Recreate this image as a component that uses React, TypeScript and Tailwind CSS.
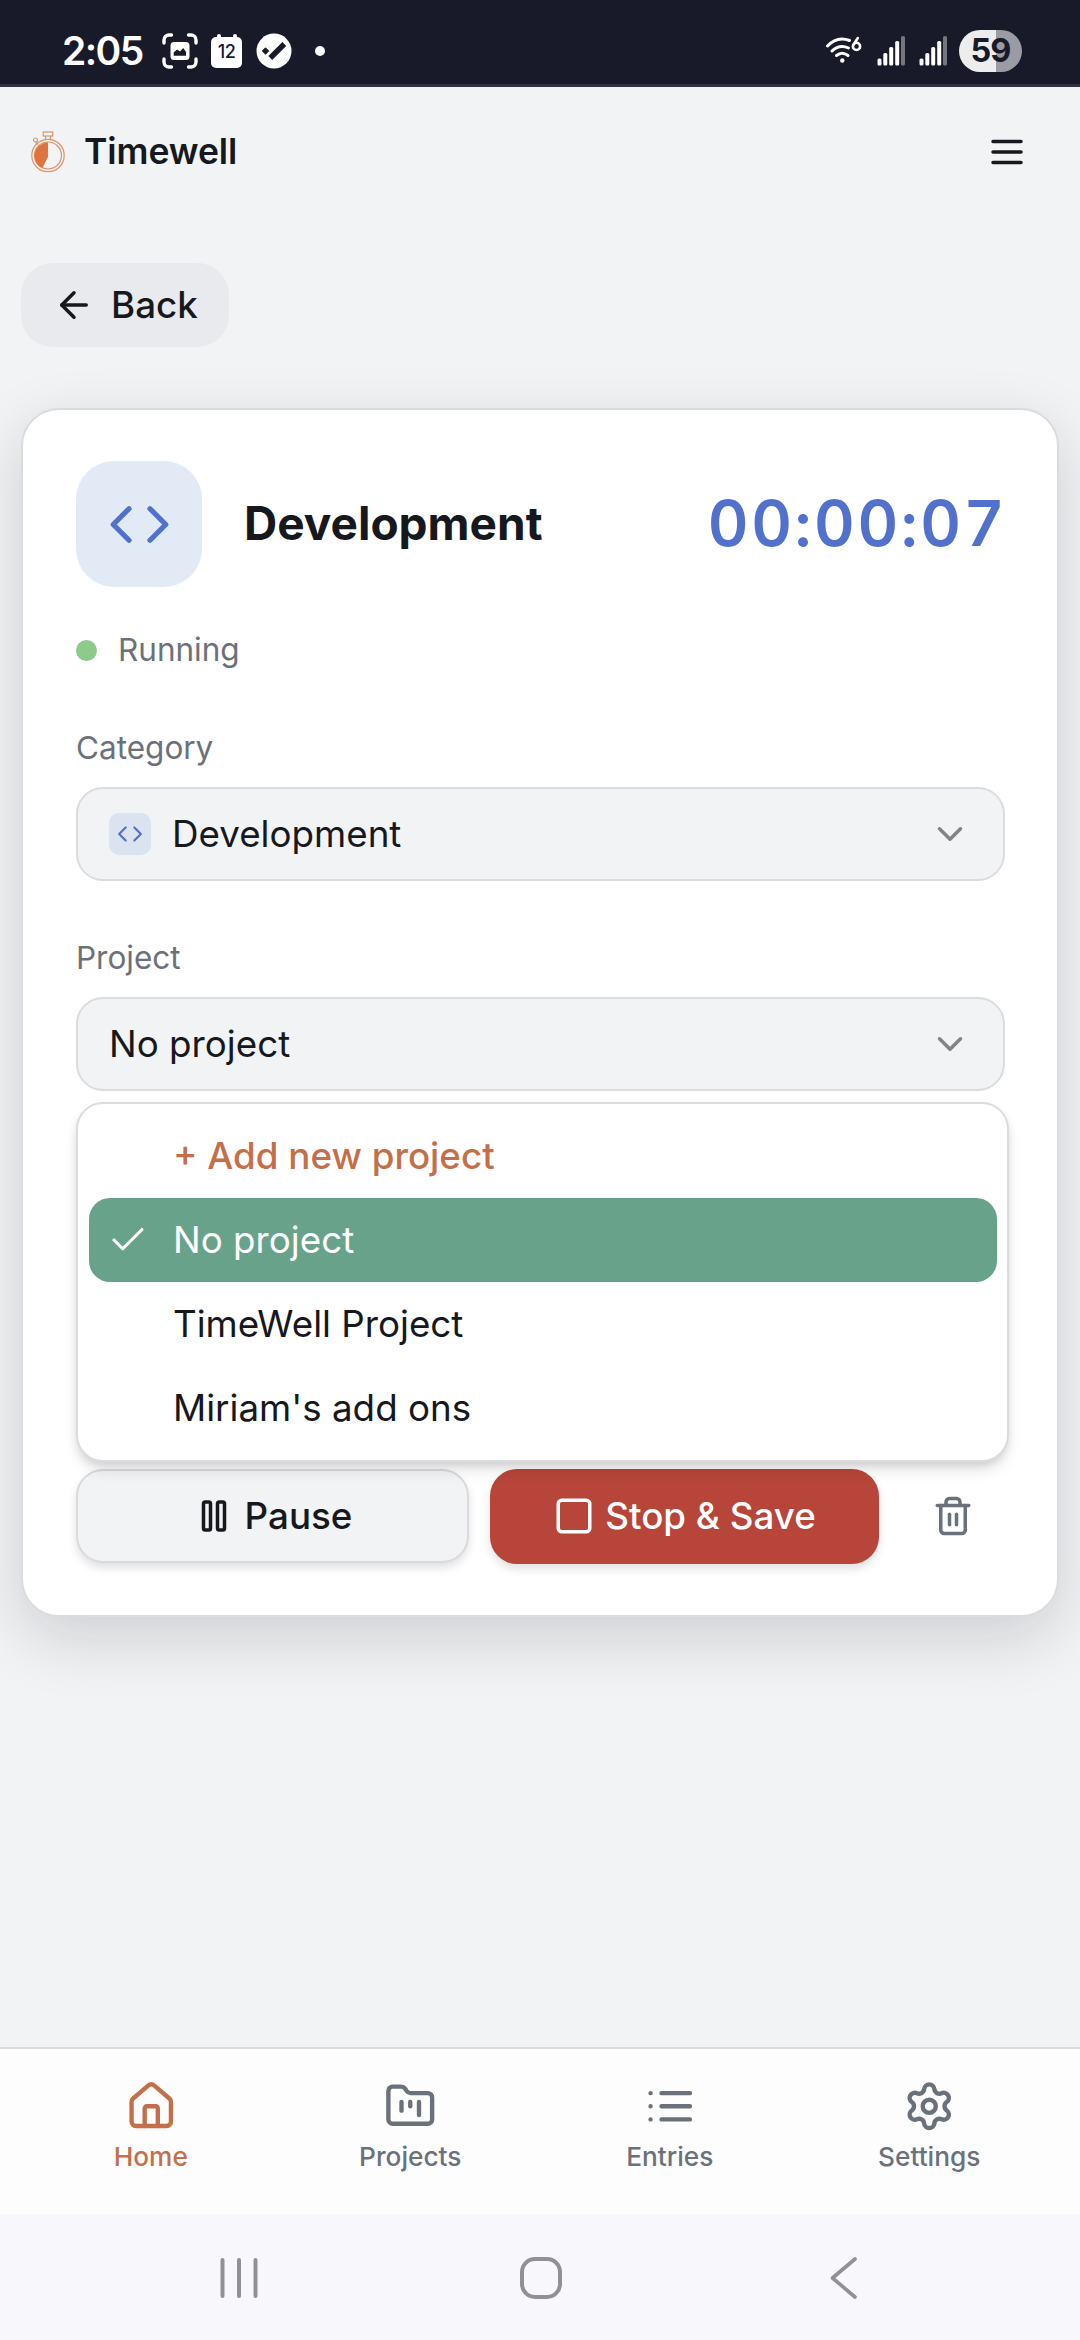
import React from "react";
import {
  ArrowLeft,
  Check,
  ChevronDown,
  Code,
  FolderKanban,
  House,
  Settings,
  Square,
  Trash2,
} from "lucide-react";

const stroke = {
  viewBox: "0 0 24 24",
  fill: "none",
  stroke: "currentColor",
  strokeWidth: 2,
  strokeLinecap: "round" as const,
  strokeLinejoin: "round" as const,
};

function SignalBars() {
  return (
    <svg className="h-[30px] w-[29px]" viewBox="0 0 29 30" fill="#fff">
      <rect x="0.5" y="22.5" width="4" height="7" rx="1.5" />
      <rect x="6.3" y="17" width="4" height="12.5" rx="1.5" />
      <rect x="12.2" y="11" width="4" height="18.5" rx="1.5" />
      <rect x="18.2" y="5" width="4" height="24.5" rx="1.5" />
      <rect x="24" y="0" width="4" height="29.5" rx="1.5" opacity="0.4" />
    </svg>
  );
}

function StatusBar() {
  return (
    <div className="flex h-[87px] items-center justify-between border-b-[3px] border-[#32333f] bg-[#191a29] pt-[19px] pr-[58px] pb-[2px] pl-[62px]">
      <div className="flex items-center">
        <span className="w-[100px] text-[39px] leading-none font-semibold tracking-[-1.6px] text-white">2:05</span>
        <svg className="h-[36px] w-[36px]" viewBox="0 0 36 36" fill="none">
          <path
            d="M2 10V7a5 5 0 0 1 5-5h2.500M26.500 2H29a5 5 0 0 1 5 5v3M34 26v3a5 5 0 0 1-5 5h-2.500M9.500 34H7a5 5 0 0 1-5-5v-3"
            stroke="#fff"
            strokeWidth="3.400"
            strokeLinecap="round"
          />
          <rect x="8.500" y="9" width="19" height="18" rx="3.500" fill="#fff" />
          <path d="M11.700 22.800v-3.300l3.300-3 3 2 3.200-3.500 2.800 4v3.800z" fill="#191a29" />
        </svg>
        <div className="ml-[13px] flex h-[34px] w-[31px] flex-col items-center">
          <div className="flex w-[20px] justify-between">
            <div className="h-[3px] w-[4px] rounded-t-full bg-white" />
            <div className="h-[3px] w-[4px] rounded-t-full bg-white" />
          </div>
          <div className="flex h-[31px] w-[31px] items-center justify-center rounded-[5px] bg-white text-[18px] leading-none font-medium tracking-[-0.5px] text-[#191a29]">
            12
          </div>
        </div>
        <svg className="ml-[14px] h-[36px] w-[36px]" viewBox="0 0 36 36">
          <circle cx="18" cy="18" r="17.500" fill="#fff" />
          <path d="M9.500 14.800l3.200 3.200-3.200 3.200L6.300 18z" fill="#191a29" stroke="#191a29" strokeLinejoin="round" />
          <path d="M14.300 25 28.300 11" stroke="#191a29" strokeWidth="5.400" />
        </svg>
        <div className="ml-[23px] h-[10px] w-[10px] rounded-full bg-white" />
      </div>
      <div className="flex items-center">
        <svg className="mr-[15px] h-[30px] w-[36px]" viewBox="0 0 36 30" fill="none" stroke="#fff" strokeWidth="3" strokeLinecap="round">
          <path d="M1.500 10C8 3 16 1.500 23.500 4.500" />
          <path d="M6 15c5-4.800 11-5.500 16.500-3" />
          <path d="M10.500 19.500c3.500-2.800 8-2.800 11.500 0" />
          <circle cx="16.300" cy="24.500" r="2.200" fill="#fff" stroke="none" />
          <path d="M31.800 2 27.600 8.600" strokeWidth="2.600" />
          <circle cx="30.500" cy="10.400" r="3.600" strokeWidth="2.600" />
        </svg>
        <SignalBars />
        <div className="w-[13px]" />
        <SignalBars />
        <div className="ml-[11px] flex h-[42px] w-[63px] items-center justify-center rounded-full bg-[linear-gradient(90deg,#ededee_58%,#9a9ba3_58%)] pt-px text-[32.5px] leading-none font-bold tracking-[-1px] text-[#191a29]">
          59
        </div>
      </div>
    </div>
  );
}

function Logo() {
  return (
    <svg className="h-[42px] w-[34px]" viewBox="0 0 34 42" fill="none" stroke="#de9468" strokeWidth="1.200">
      <rect x="12.200" y="1" width="9.500" height="4" />
      <path d="M14.500 5v3M19.500 5v3M4.500 11.500 7 13.500" />
      <circle cx="4.500" cy="9" r="2" />
      <circle cx="17" cy="24.500" r="16.200" />
      <circle cx="17" cy="24.500" r="13.500" />
      <path d="M17 11.500v14L11.500 37A13.300 13.300 0 0 1 17 11.500z" fill="#dd7440" stroke="none" />
    </svg>
  );
}

function Header() {
  return (
    <header className="flex h-[130px] items-center justify-between pr-[52px] pl-[31px]">
      <div className="flex items-center gap-[19px]">
        <Logo />
        <span className="text-[35.5px] leading-none font-semibold tracking-[-0.1px] text-[#16181d]">Timewell</span>
      </div>
      <svg className="h-[42px] w-[42px] text-[#16181d]" {...stroke}>
        <path d="M4 6h16M4 12h16M4 18h16" />
      </svg>
    </header>
  );
}

function SelectBox({ children }: { children: React.ReactNode }) {
  return (
    <div className="flex h-[94px] w-[929px] items-center justify-between rounded-[27px] border-2 border-[#dadcdf] bg-[#f1f3f5] pr-[32px] pl-[31px] text-[36.75px] text-[#16181d]">
      <div className="flex items-center gap-[21px]">{children}</div>
      <ChevronDown className="h-[42px] w-[42px] text-[#818386]" />
    </div>
  );
}

function Option({ label, selected, accent }: { label: string; selected?: boolean; accent?: boolean }) {
  return (
    <div
      className={
        "flex h-[84px] w-[908px] items-center rounded-[21px] pl-[18px] text-[36.75px] " +
        (selected ? "bg-[#68a28a] text-white" : accent ? "font-medium text-[#c3704a]" : "text-[#16181d]")
      }
    >
      <div className="w-[66px]">{selected && <Check className="h-[42px] w-[42px]" strokeWidth={1.8} />}</div>
      {label}
    </div>
  );
}

function TimerCard() {
  return (
    <section className="h-[1209px] w-[1038px] rounded-[38px] border-2 border-[#dadce0] bg-white pt-[51px] pl-[53px] shadow-[0_21px_63px_rgba(22,22,32,0.16)]">
      <div className="flex h-[126px] w-[929px] items-center">
        <div className="flex h-[126px] w-[126px] items-center justify-center rounded-[38px] bg-[#e2eaf6]">
          <Code className="h-[63px] w-[63px] text-[#5271cc]" />
        </div>
        <h1 className="ml-[42px] flex-1 pb-[2px] text-[46px] leading-none font-bold text-[#16181d]">Development</h1>
        <div className="mr-[-2px] pb-[2px] text-[63px] leading-none font-semibold tracking-[2.6px] text-[#5271cc] tabular-nums">
          00:00:07
        </div>
      </div>
      <div className="mt-[42px] flex h-[42px] items-center gap-[21px]">
        <div className="h-[21px] w-[21px] rounded-full bg-[#8ccb8c]" />
        <span className="text-[31.5px] text-[#6b717b]">Running</span>
      </div>
      <div className="mt-[56px] flex h-[42px] items-center text-[31.5px] text-[#6b717b]">Category</div>
      <div className="mt-[18px]">
        <SelectBox>
          <div className="flex h-[42px] w-[42px] items-center justify-center rounded-[10px] bg-[#dbe2f0]">
            <Code className="h-[26px] w-[26px] text-[#5271cc]" />
          </div>
          <span>Development</span>
        </SelectBox>
      </div>
      <div className="mt-[56px] flex h-[42px] items-center text-[31.5px] text-[#6b717b]">Project</div>
      <div className="relative mt-[18px]">
        <SelectBox>
          <span>No project</span>
        </SelectBox>
        <div className="absolute top-[105px] left-0 z-10 h-[360px] w-[933px] rounded-[27px] border-2 border-[#dadcdf] bg-white pt-[10px] pl-[11px] shadow-[0_10px_16px_-3px_rgba(0,0,0,0.12),0_4px_10px_-2px_rgba(0,0,0,0.12)]">
          <Option label="+ Add new project" accent />
          <Option label="No project" selected />
          <Option label="TimeWell Project" />
          <Option label="Miriam's add ons" />
        </div>
      </div>
      <div className="mt-[378px] flex items-start gap-[21px] text-[36.75px] font-medium">
        <div className="flex h-[94px] w-[393px] items-center justify-center gap-[10px] rounded-[27px] border-2 border-[#d8dade] bg-[#f1f3f5] text-[#16181d] shadow-[0_5px_10px_rgba(0,0,0,0.12)]">
          <svg className="h-[42px] w-[42px]" {...stroke}>
            <rect x="14" y="4" width="4" height="16" rx="1" />
            <rect x="6" y="4" width="4" height="16" rx="1" />
          </svg>
          Pause
        </div>
        <div className="flex h-[95px] w-[389px] items-center justify-center gap-[10px] rounded-[27px] bg-[#b84539] pb-px text-white shadow-[0_5px_10px_rgba(0,0,0,0.12)]">
          <Square className="h-[42px] w-[42px]" />
          Stop &amp; Save
        </div>
        <Trash2 className="mt-[26px] ml-[32px] h-[42px] w-[42px] text-[#6b717b]" />
      </div>
    </section>
  );
}

function ListIcon({ className }: { className?: string }) {
  return (
    <svg className={className} {...stroke}>
      <path d="M8 6h13M8 12h13M8 18h13M3 6h.01M3 12h.01M3 18h.01" />
    </svg>
  );
}

const tabs = [
  { label: "Home", Icon: House, active: true },
  { label: "Projects", Icon: FolderKanban },
  { label: "Entries", Icon: ListIcon },
  { label: "Settings", Icon: Settings },
];

function TabBar() {
  return (
    <nav className="grid h-[167px] grid-cols-4 border-t-2 border-[#dadbdd] bg-[#fdfdfe] px-[21px] pt-[31px]">
      {tabs.map(({ label, Icon, active }) => (
        <div
          key={label}
          className={"flex flex-col items-center " + (active ? "text-[#c3704a]" : "text-[#6b717b]")}
        >
          <Icon className="h-[52.5px] w-[52.5px]" />
          <span className="mt-[8px] text-[26.25px] leading-[32px] font-medium">{label}</span>
        </div>
      ))}
    </nav>
  );
}

function SystemNav() {
  return (
    <div className="flex h-[126px] items-center justify-between bg-[#f7f7fc] pt-px pr-[222px] pl-[219px] text-[#919195]">
      <svg className="h-[42px] w-[40px]" viewBox="0 0 40 42" stroke="currentColor" strokeWidth="4" strokeLinecap="round">
        <path d="M3.500 3v36M20 3v36M36.500 3v36" />
      </svg>
      <div className="mr-[7px] h-[42px] w-[42px] rounded-[15px] border-4 border-current" />
      <svg className="h-[44px] w-[28px]" viewBox="0 0 28 44" fill="none" stroke="currentColor" strokeWidth="3.600" strokeLinecap="round" strokeLinejoin="round">
        <path d="M25 3 2.500 22 25 41" />
      </svg>
    </div>
  );
}

export default function App() {
  return (
    <div className="flex h-[2340px] w-[1080px] flex-col overflow-hidden bg-[#f1f3f5] font-['Inter',sans-serif]">
      <StatusBar />
      <Header />
      <main className="flex flex-1 flex-col items-start pt-[46px] pl-[21px]">
        <button className="mb-[61px] flex h-[84px] w-[208px] shrink-0 items-center gap-[16px] rounded-[32px] bg-[#e9eaed] pl-[32px] text-[36.75px] font-medium text-[#16181d]">
          <ArrowLeft className="h-[42px] w-[42px]" />
          Back
        </button>
        <TimerCard />
      </main>
      <TabBar />
      <SystemNav />
    </div>
  );
}
